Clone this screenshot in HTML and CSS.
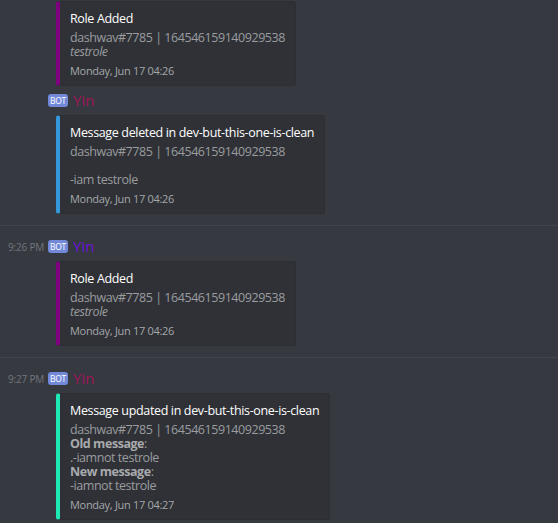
FILE: index.html
```html
<!DOCTYPE html>
<html>
<head>
<meta charset="utf-8">
<link rel="stylesheet" href="styles.css">
</head>
<body>
<div class="chat">
  <div class="group first">
    <div class="embed purple">
      <div class="title">Role Added</div>
      <div class="desc">dashwav#7785 | 164546159140929538<br><em>testrole</em></div>
      <div class="footer">Monday, Jun 17 04:26</div>
    </div>
    <div class="header">
      <span class="time"></span>
      <span class="bot">BOT</span>
      <span class="name crimson">Yin</span>
    </div>
    <div class="embed blue">
      <div class="title">Message deleted in dev-but-this-one-is-clean</div>
      <div class="desc">dashwav#7785 | 164546159140929538<br><br>-iam testrole</div>
      <div class="footer">Monday, Jun 17 04:26</div>
    </div>
  </div>
  <div class="group">
    <div class="header">
      <span class="time">9:26 PM</span>
      <span class="bot">BOT</span>
      <span class="name violet">Yin</span>
    </div>
    <div class="embed purple">
      <div class="title">Role Added</div>
      <div class="desc">dashwav#7785 | 164546159140929538<br><em>testrole</em></div>
      <div class="footer">Monday, Jun 17 04:26</div>
    </div>
  </div>
  <div class="group">
    <div class="header">
      <span class="time">9:27 PM</span>
      <span class="bot">BOT</span>
      <span class="name crimson">Yin</span>
    </div>
    <div class="embed teal">
      <div class="title">Message updated in dev-but-this-one-is-clean</div>
      <div class="desc">dashwav#7785 | 164546159140929538<br><strong>Old message</strong>:<br>.-iamnot testrole<br><strong>New message</strong>:<br>-iamnot testrole</div>
      <div class="footer">Monday, Jun 17 04:27</div>
    </div>
  </div>
</div>
</body>
</html>
```

FILE: styles.css
```css
html, body {
  margin: 0;
  padding: 0;
  background: #36393f;
  height: 100%;
  overflow: hidden;
}
body {
  font-family: "Open Sans", "Noto Sans", sans-serif;
  color: #dcddde;
}
.chat {
  display: flex;
  flex-direction: column;
}
.group {
  padding: 10px 0 11px 0;
  border-bottom: 1px solid #42454b;
  display: flex;
  flex-direction: column;
  align-items: flex-start;
}
.group.first {
  padding-top: 1px;
}
.header {
  display: flex;
  align-items: center;
  height: 21px;
  padding-left: 8px;
  margin-top: 4px;
}
.group > :first-child {
  margin-top: 0;
}
.time {
  width: 40px;
  font-size: 10px;
  color: #72767d;
  letter-spacing: -0.2px;
}
.bot {
  display: inline-flex;
  align-items: center;
  justify-content: center;
  width: 20px;
  height: 13px;
  background: #7289da;
  color: #fff;
  border-radius: 3px;
  font-size: 8.5px;
  font-weight: 500;
  letter-spacing: -0.3px;
}
.name {
  margin-left: 5px;
  font-size: 15px;
  line-height: 21px;
}
.crimson { color: #a0145a; }
.violet { color: #6a14d8; }
.embed {
  margin-left: 56px;
  margin-top: 4px;
  background: #2f3136;
  border: 1px solid #2c2e33;
  border-left: 4px solid;
  border-radius: 3px;
  padding: 7px 10px 6px 10px;
}
.purple { border-left-color: #800080; }
.blue { border-left-color: #3498db; }
.teal { border-left-color: #1de9b6; }
.title {
  font-size: 12.5px;
  line-height: 20px;
  color: #ffffff;
  font-weight: 500;
  letter-spacing: -0.35px;
}
.desc {
  margin-top: 2px;
  font-size: 12.5px;
  line-height: 14px;
  color: #9a9c9f;
  letter-spacing: -0.45px;
}
.desc strong {
  font-weight: 700;
  color: #a8aaad;
}
.footer {
  margin-top: 4px;
  font-size: 11px;
  line-height: 16px;
  color: #a5a7aa;
  letter-spacing: -0.3px;
}
```
